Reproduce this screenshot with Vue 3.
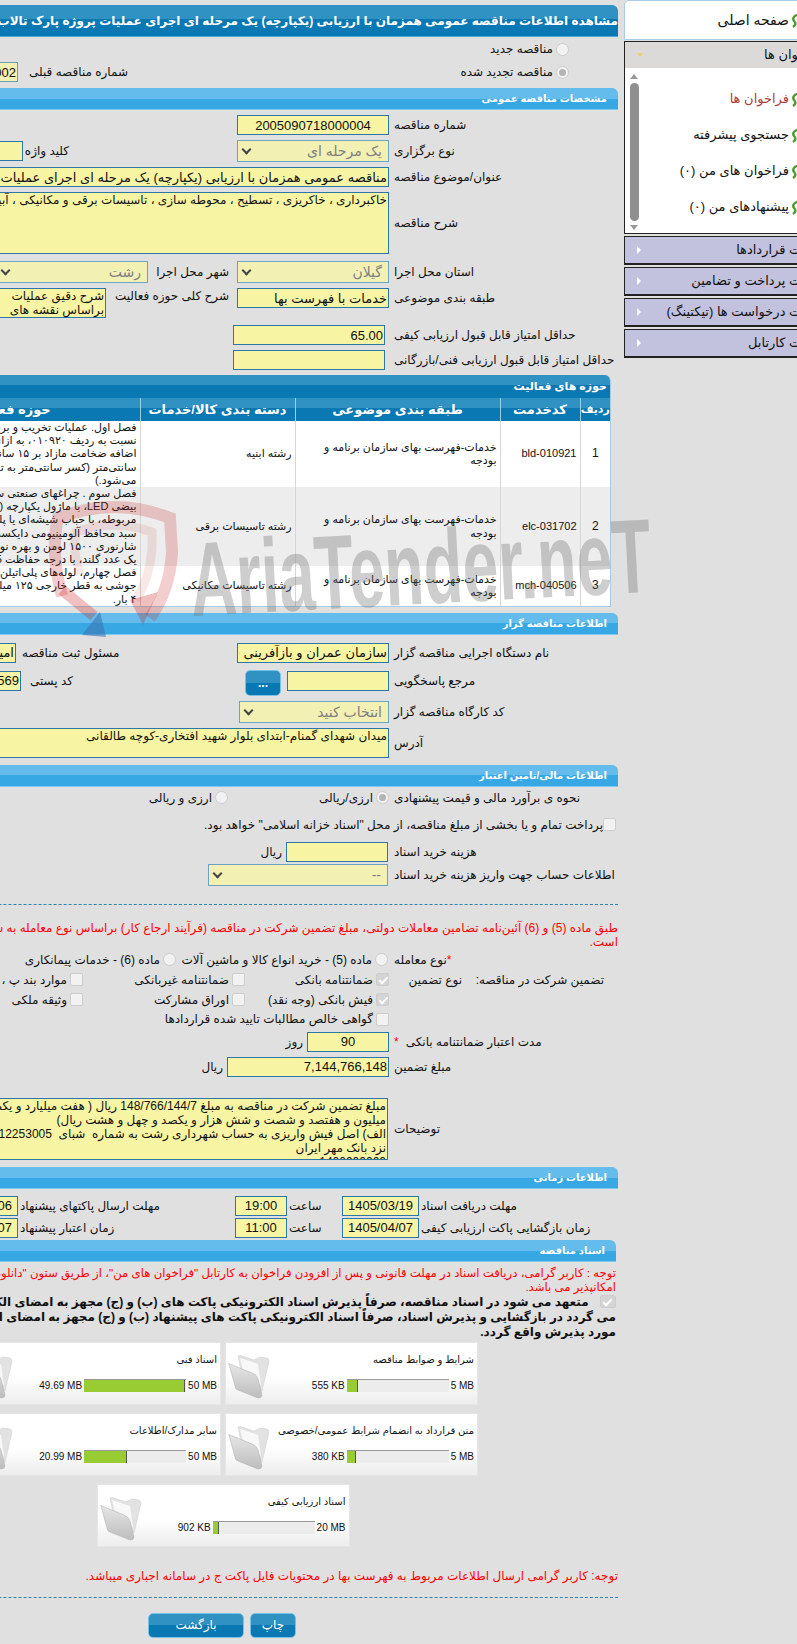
<script setup>
const menuGroups = ['مدیریت قراردادها', 'مدیریت پرداخت و تضامین', 'مدیریت درخواست ها (تیکتینگ)', 'مدیریت کارتابل']
const menuItems = [
  { label: 'فراخوان ها', active: true },
  { label: 'جستجوی پیشرفته' },
  { label: 'فراخوان های من (۰)' },
  { label: 'پیشنهادهای من (۰)' }
]

const scopeRows = [
  {
    id: 1, code: 'bld-010921', cat: 'خدمات-فهرست بهای سازمان برنامه و بودجه', group: 'رشته ابنیه',
    lines: [
      'فصل اول. عملیات تخریب و برچیدن ساختمان',
      'نسبت به ردیف ۰۱۰۹۲۰، به ازای هر سانتی‌متر',
      'اضافه ضخامت مازاد بر ۱۵ سانتی‌متر تا ۲۰',
      'سانتی‌متر (کسر سانتی‌متر به تناسب محاسبه',
      'می‌شود.)'
    ]
  },
  {
    id: 2, code: 'elc-031702', cat: 'خدمات-فهرست بهای سازمان برنامه و بودجه', group: 'رشته تاسیسات برقی',
    lines: [
      'فصل سوم . چراغهای صنعتی سقفی و دیواری',
      'بیضی LED، با ماژول یکپارچه (COB) با درایور',
      'مربوطه، با حباب شیشه‌ای یا پلی کربنات همراه',
      'سبد محافظ آلومینیومی دایکست شده با توان',
      'شارنوری ۱۵۰۰ لومن و بهره نوری مناسب با',
      'یک عدد گلند، با درجه حفاظت IP65 کامل'
    ]
  },
  {
    id: 3, code: 'mch-040506', cat: 'خدمات-فهرست بهای سازمان برنامه و بودجه', group: 'رشته تاسیسات مکانیکی',
    lines: [
      'فصل چهارم، لوله‌های پلی‌اتیلن فشار قوی',
      'جوشی به قطر خارجی ۱۲۵ میلی‌متر برای فشار',
      '۴ بار.'
    ]
  }
]

const docRows = [
  [
    { title: 'شرایط و ضوابط مناقصه', used: '555 KB', total: '5 MB', pct: 11 },
    { title: 'اسناد فنی', used: '49.69 MB', total: '50 MB', pct: 99.4 }
  ],
  [
    { title: 'متن قرارداد به انضمام شرایط عمومی/خصوصی', used: '380 KB', total: '5 MB', pct: 9 },
    { title: 'سایر مدارک/اطلاعات', used: '20.99 MB', total: '50 MB', pct: 42 }
  ],
  [
    { title: 'اسناد ارزیابی کیفی', used: '902 KB', total: '20 MB', pct: 6 }
  ]
]

const descText = 'خاکبرداری ، خاکریزی ، تسطیح ، محوطه سازی ، تاسیسات برقی و مکانیکی ، آبیاری و فضای سبز'
const activityText = 'شرح دقیق عملیات\nبراساس نقشه های'
const addressText = 'میدان شهدای گمنام-ابتدای بلوار شهید افتخاری-کوچه طالقانی'
const guaranteeText = 'مبلغ تضمین شرکت در مناقصه به مبلغ 148/766/144/7 ریال ( هفت میلیارد و یکصد و چهل و چهار\nمیلیون و هفتصد و شصت و شش هزار و یکصد و چهل و هشت ریال)\nالف) اصل فیش واریزی به حساب شهرداری رشت به شماره  شبای  IR060600320170012253005\nنزد بانک مهر ایران\n1400000000'
</script>

<template>
  <div class="page" dir="rtl">
    <aside class="side">
      <div class="home">
        <svg class="leaf" viewBox="0 0 14 16"><path d="M9 2C2 3 0 6 2 9c2 2 2 4-1 6" fill="none" stroke="#4a9c2d" stroke-width="2.4"/><path d="M9 2l2 3" stroke="#e9a53a" stroke-width="1.5"/></svg>
        <span>صفحه اصلی</span>
      </div>
      <div class="acc open">
        <div class="acc-head"><span class="acc-text">عنوان ها</span><i class="tri-down"></i></div>
        <div class="acc-body">
          <ul class="acc-list">
            <li v-for="item in menuItems" :key="item.label" :class="{ active: item.active }">
              <svg class="leaf" viewBox="0 0 14 16"><path d="M9 2C2 3 0 6 2 9c2 2 2 4-1 6" fill="none" stroke="#4a9c2d" stroke-width="2.4"/><path d="M9 2l2 3" stroke="#e9a53a" stroke-width="1.5"/></svg>
              <span>{{ item.label }}</span>
            </li>
          </ul>
          <div class="scroll"><i class="sc-up"></i><b></b><i class="sc-down"></i></div>
        </div>
      </div>
      <div v-for="g in menuGroups" :key="g" class="acc-group">
        <span class="acc-text">{{ g }}</span><i class="tri-left"></i>
      </div>
    </aside>

    <main class="main">
      <div class="title-bar">مشاهده اطلاعات مناقصه عمومی همزمان با ارزیابی (یکپارچه) یک مرحله ای اجرای عملیات پروژه پارک تالاب عینک</div>

      <div class="row r-opt">
        <label class="top-opt"><input type="radio" disabled class="rd"> مناقصه جدید</label>
      </div>
      <div class="row r-prev">
        <label class="top-opt"><input type="radio" disabled checked class="rd"> مناقصه تجدید شده</label>
        <span class="prev-lab">شماره مناقصه قبلی</span>
        <input class="fld pale f-prev" readonly value="2005090718000002">
      </div>

      <div class="sec">مشخصات مناقصه عمومی</div>
      <div class="row">
        <span class="lab">شماره مناقصه</span>
        <input class="fld f-main center" readonly value="2005090718000004">
      </div>
      <div class="row">
        <span class="lab">نوع برگزاری</span>
        <div class="sel f-main"><span>یک مرحله ای</span><i class="chev"></i></div>
        <span class="kw-lab">کلید واژه</span>
        <input class="fld f-kw" readonly>
      </div>
      <div class="row">
        <span class="lab">عنوان/موضوع مناقصه</span>
        <input class="fld f-wide" readonly value="مناقصه عمومی همزمان با ارزیابی (یکپارچه) یک مرحله ای اجرای عملیات پروژه پارک تالاب عینک">
      </div>
      <div class="row r-desc">
        <span class="lab">شرح مناقصه</span>
        <textarea class="fld f-wide area" readonly wrap="off" :value="descText"></textarea>
      </div>
      <div class="row r-city">
        <span class="lab">استان محل اجرا</span>
        <div class="sel f-main"><span>گیلان</span><i class="chev"></i></div>
        <span class="city-lab">شهر محل اجرا</span>
        <div class="sel f-city"><span>رشت</span><i class="chev"></i></div>
      </div>
      <div class="row r-cat">
        <span class="lab">طبقه بندی موضوعی</span>
        <input class="fld f-main" readonly value="خدمات با فهرست بها">
        <span class="city-lab act-lab">شرح کلی حوزه فعالیت</span>
        <textarea class="fld area f-act" readonly wrap="off" :value="activityText"></textarea>
      </div>
      <div class="row r-score">
        <span class="lab">حداقل امتیاز قابل قبول ارزیابی کیفی</span>
        <input class="fld f-score" readonly value="65.00">
      </div>
      <div class="row">
        <span class="lab">حداقل امتیاز قابل قبول ارزیابی فنی/بازرگانی</span>
        <input class="fld f-score" readonly>
      </div>

      <section class="panel">
        <div class="panel-title">حوزه های فعالیت</div>
        <table class="scope">
          <colgroup>
            <col class="c1"><col class="c2"><col class="c3"><col class="c4"><col class="c5">
          </colgroup>
          <thead>
            <tr><th>ردیف</th><th>کدخدمت</th><th>طبقه بندی موضوعی</th><th>دسته بندی کالا/خدمات</th><th>حوزه فعالیت</th></tr>
          </thead>
          <tbody>
            <tr v-for="r in scopeRows" :key="r.id">
              <td class="num">{{ r.id }}</td>
              <td class="num">{{ r.code }}</td>
              <td>{{ r.cat }}</td>
              <td>{{ r.group }}</td>
              <td class="long"><div v-for="l in r.lines" :key="l">{{ l }}</div></td>
            </tr>
          </tbody>
        </table>
      </section>

      <div class="sec s-org">اطلاعات مناقصه گزار</div>
      <div class="row r-org">
        <span class="lab">نام دستگاه اجرایی مناقصه گزار</span>
        <input class="fld f-main" readonly value="سازمان عمران و بازآفرینی فضاهای شهری">
        <span class="resp-lab">مسئول ثبت مناقصه</span>
        <input class="fld f-resp" readonly value="امیر حسین">
      </div>
      <div class="row r-ref">
        <span class="lab">مرجع پاسخگویی</span>
        <input class="fld f-ref" readonly>
        <button class="btn btn-dots" type="button">...</button>
        <span class="zip-lab">کد پستی</span>
        <input class="fld f-zip" readonly value="4134913569">
      </div>
      <div class="row r-work">
        <span class="lab">کد کارگاه مناقصه گزار</span>
        <div class="sel f-work"><span>انتخاب کنید</span><i class="chev"></i></div>
      </div>
      <div class="row r-addr">
        <span class="lab">آدرس</span>
        <textarea class="fld f-wide area" readonly :value="addressText"></textarea>
      </div>

      <div class="sec s-fin">اطلاعات مالی/تامین اعتبار</div>
      <div class="row r-fin">
        <span class="lab">نحوه ی برآورد مالی و قیمت پیشنهادی</span>
        <label class="opt o-fin"><input type="radio" disabled checked class="rd">ارزی/ریالی</label>
        <label class="opt"><input type="radio" disabled class="rd">ارزی و ریالی</label>
      </div>
      <div class="row r-treasury">
        <label class="opt"><input type="checkbox" disabled class="cb">پرداخت تمام و یا بخشی از مبلغ مناقصه، از محل "اسناد خزانه اسلامی" خواهد بود.</label>
      </div>
      <div class="row r-cost">
        <span class="lab">هزینه خرید اسناد</span>
        <input class="fld f-cost" readonly>
        <span class="unit">ریال</span>
      </div>
      <div class="row r-acct">
        <span class="lab">اطلاعات حساب جهت واریز هزینه خرید اسناد</span>
        <div class="sel f-acct"><span>--</span><i class="chev"></i></div>
      </div>
      <hr class="dash d-fin">

      <p class="warn w-law">طبق ماده (5) و (6) آئین‌نامه تضامین معاملات دولتی، مبلغ تضمین شرکت در مناقصه (فرآیند ارجاع کار) براساس نوع معامله به شرح زیر تعیین شده<br>است.</p>

      <div class="row r-deal">
        <span class="lab"><em>*</em>نوع معامله</span>
        <label class="opt o-deal"><input type="radio" disabled class="rd">ماده (5) - خرید انواع کالا و ماشین آلات</label>
        <label class="opt"><input type="radio" disabled class="rd">ماده (6) - خدمات پیمانکاری</label>
      </div>
      <div class="row r-guar">
        <span class="g-a">تضمین شرکت در مناقصه:</span>
        <span class="g-b">نوع تضمین</span>
        <label class="opt o-g1"><input type="checkbox" disabled checked class="cb">ضمانتنامه بانکی</label>
        <label class="opt o-g2"><input type="checkbox" disabled class="cb">ضمانتنامه غیربانکی</label>
        <label class="opt"><input type="checkbox" disabled class="cb">موارد بند پ ، ت</label>
      </div>
      <div class="row r-guar2">
        <label class="opt o-g1"><input type="checkbox" disabled checked class="cb">فیش بانکی (وجه نقد)</label>
        <label class="opt o-g2"><input type="checkbox" disabled class="cb">اوراق مشارکت</label>
        <label class="opt"><input type="checkbox" disabled class="cb">وثیقه ملکی</label>
      </div>
      <div class="row r-guar3">
        <label class="opt"><input type="checkbox" disabled class="cb">گواهی خالص مطالبات تایید شده قراردادها</label>
      </div>
      <div class="row r-days">
        <span class="lab">مدت اعتبار ضمانتنامه بانکی<em class="star-gap">*</em></span>
        <input class="fld f-days center" readonly value="90">
        <span class="unit">روز</span>
      </div>
      <div class="row r-amount">
        <span class="lab">مبلغ تضمین</span>
        <input class="fld f-amount" readonly value="7,144,766,148">
        <span class="unit">ریال</span>
      </div>
      <div class="row r-note">
        <span class="lab">توضیحات</span>
        <textarea class="fld area f-note" readonly wrap="off" :value="guaranteeText"></textarea>
      </div>

      <div class="sec s-time">اطلاعات زمانی</div>
      <div class="row r-t1">
        <span class="lab t-lab">مهلت دریافت اسناد</span>
        <input class="fld f-date center" readonly value="1405/03/19">
        <span class="t-hour">ساعت</span>
        <input class="fld f-hour center" readonly value="19:00">
        <span class="t-right">مهلت ارسال پاکتهای پیشنهاد</span>
        <input class="fld f-date2 center" readonly value="1405/04/06">
      </div>
      <div class="row r-t2">
        <span class="lab t-lab">زمان بازگشایی پاکت ارزیابی کیفی</span>
        <input class="fld f-date center" readonly value="1405/04/07">
        <span class="t-hour">ساعت</span>
        <input class="fld f-hour center" readonly value="11:00">
        <span class="t-right">زمان اعتبار پیشنهاد</span>
        <input class="fld f-date2 center" readonly value="1405/07/07">
      </div>

      <div class="sec s-docs">اسناد مناقصه</div>
      <p class="warn w-docs">توجه : کاربر گرامی، دریافت اسناد در مهلت قانونی و پس از افزودن فراخوان به کارتابل "فراخوان های من"، از طریق ستون "دانلود اسناد"<br>امکانپذیر می باشد.</p>
      <div class="pledge">
        <input type="checkbox" disabled checked class="cb cb-big">
        متعهد می شود در اسناد مناقصه، صرفاً پذیرش اسناد الکترونیکی پاکت های (ب) و (ج) مجهز به امضای الکترونیکی مجاز<br>
        می گردد در بازگشایی و پذیرش اسناد، صرفاً اسناد الکترونیکی پاکت های پیشنهاد (ب) و (ج) مجهز به امضای الکترونیکی<br>
        مورد پذیرش واقع گردد.
      </div>

      <div class="docs">
        <div v-for="(line, i) in docRows" :key="i" class="doc-row">
          <div v-for="d in line" :key="d.title" class="doc">
            <div class="doc-body">
              <div class="doc-title">{{ d.title }}</div>
              <div class="doc-size">
                <span dir="ltr">{{ d.total }}</span>
                <div class="bar"><div class="fill" :style="{ width: d.pct + '%' }"></div></div>
                <span dir="ltr">{{ d.used }}</span>
              </div>
            </div>
            <svg class="folder" viewBox="0 0 42 44">
              <defs>
                <linearGradient id="fg" x1="0" y1="0" x2="0" y2="1"><stop offset="0" stop-color="#e6e6e6"/><stop offset="1" stop-color="#bdbdbd"/></linearGradient>
              </defs>
              <path d="M10 1Q12 0 14 1L26 5L32 2L39 3Q41 4 41 6L34 36L14 20Z" fill="#e2e2e2" stroke="#d2d2d2" stroke-width=".6"/>
              <path d="M12 3L30 9L33 30L16 20Z" fill="#f8f8f8"/>
              <path d="M1 9Q0 8 2 9L24 18Q29 20 30 24L34 40Q34 43 30 43L10 35Q7 34 7 31Z" fill="url(#fg)" stroke="#b5b5b5" stroke-width=".6"/>
            </svg>
          </div>
        </div>
      </div>

      <p class="warn w-end">توجه: کاربر گرامی ارسال اطلاعات مربوط به فهرست بها در محتویات فایل پاکت ج در سامانه اجباری میباشد.</p>
      <hr class="dash d-end">
      <div class="actions">
        <button class="btn btn-print" type="button">چاپ</button>
        <button class="btn btn-back" type="button">بازگشت</button>
      </div>
    </main>

    <div class="mark" aria-hidden="true">
      <svg class="mark-logo" viewBox="40 495 150 150">
        <path d="M62 596 Q50 552 58 518 Q115 496 170 518 L172 552 Q170 590 150 618" fill="none" stroke="#c81e1e" stroke-opacity=".22" stroke-width="12"/>
        <path d="M80 574 Q72 550 76 532 Q112 518 152 532 Q154 570 136 600" fill="none" stroke="#c81e1e" stroke-opacity=".1" stroke-width="9"/>
        <path d="M158 592 L143 625 L130 600 Z" fill="#c81e1e" fill-opacity=".28"/>
        <path d="M62 590 L94 616" stroke="#c81e1e" stroke-opacity=".28" stroke-width="11"/>
        <path d="M100 612 L106 637 L82 635 Z" fill="#3a76b4" fill-opacity=".6"/>
      </svg>
      <div class="mark-text">AriaTender.neT</div>
    </div>
  </div>
</template>

<style scoped>
.page {
  position: relative;
  display: flex;
  align-items: flex-start;
  gap: 6px;
  width: 797px;
  height: 1644px;
  overflow: hidden;
  background: #e0e0e0;
  color: #111;
  font: 12px/14px "Liberation Sans", "DejaVu Sans", sans-serif;
}

/* sidebar */
.side {
  flex: none;
  width: 230px;
  margin-right: -57px;
  white-space: nowrap;
}
.home {
  display: flex;
  align-items: center;
  gap: 3px;
  height: 40px;
  padding-right: 47px;
  background: #fff;
  border: 1px solid #a9cde2;
  border-top-left-radius: 5px;
  box-sizing: border-box;
  font-size: 14px;
}
.leaf {
  flex: none;
  width: 14px;
  height: 16px;
}
.acc {
  margin-top: 1px;
  border: 1px solid #222;
  border-right: 0;
}
.acc-head {
  display: flex;
  align-items: center;
  justify-content: space-between;
  height: 26px;
  padding: 0 44px 0 12px;
  background: #dcd9d9;
  font-size: 13px;
}
.acc-body {
  display: flex;
  height: 165px;
  background: #fff;
}
.acc-list {
  flex: 1;
  margin: 0;
  padding: 13px 48px 0 0;
  list-style: none;
  font-size: 13px;
}
.acc-list li {
  display: flex;
  align-items: center;
  gap: 3px;
  height: 36px;
}
.acc-list li.active {
  color: #b03a3a;
}
.scroll {
  flex: none;
  display: flex;
  flex-direction: column;
  align-items: center;
  width: 14px;
  padding: 6px 0 3px;
  margin-left: 2px;
}
.scroll b {
  flex: 1;
  width: 9px;
  margin: 4px 0;
  border-radius: 5px;
  background: #8f8f8f;
}
.sc-up, .sc-down, .tri-down, .tri-left {
  display: block;
  width: 0;
  height: 0;
}
.sc-up {
  border: 4px solid transparent;
  border-top: 0;
  border-bottom: 5px solid #999;
}
.sc-down {
  border: 4px solid transparent;
  border-bottom: 0;
  border-top: 5px solid #999;
}
.tri-down {
  border: 3px solid transparent;
  border-bottom: 0;
  border-top: 4px solid #e8d26a;
}
.tri-left {
  border: 4px solid transparent;
  border-right: 0;
  border-left: 4px solid #fff;
}
.acc-group {
  display: flex;
  align-items: center;
  justify-content: space-between;
  height: 29px;
  margin-top: 2px;
  padding: 0 24px 0 12px;
  background: #c2c2de;
  border: 1px solid #222;
  border-right: 0;
  border-bottom-width: 2px;
  box-sizing: border-box;
  font-size: 13px;
}

/* main column */
.main {
  flex: none;
  width: 800px;
  padding-top: 5px;
}
.title-bar {
  height: 32px;
  padding-top: 1px;
  border-radius: 0 6px 0 0;
  background: linear-gradient(#2f92c2 0 45%, #0a78b2 45% 100%);
  border-bottom: 1px solid #47a6d6;
  box-sizing: border-box;
  color: #fff;
  font: bold 12px/30px "Liberation Sans", "DejaVu Sans", sans-serif;
  white-space: nowrap;
}
.sec {
  height: 22px;
  padding-right: 11px;
  border-radius: 0 6px 0 0;
  background: linear-gradient(#63bceb 0 50%, #37a8e3 50% 100%);
  border-bottom: 1px solid #7cc8ee;
  box-sizing: border-box;
  color: #fff;
  font: bold 10px/21px "Liberation Sans", "DejaVu Sans", sans-serif;
}

.row {
  display: flex;
  align-items: center;
  margin-top: 5px;
  white-space: nowrap;
}
.r-opt {
  height: 22px;
  margin-top: 1px;
}
.r-prev {
  height: 22px;
  margin-top: 1px;
  margin-bottom: 5px;
}
.top-opt {
  display: flex;
  align-items: center;
  gap: 3px;
  width: 441px;
  margin-right: 49px;
  box-sizing: border-box;
}
.prev-lab {
  width: 105px;
}

.lab {
  flex: none;
  width: 224px;
  text-align: left;
}
.lab em, .g-a em {
  color: #f00;
  font-style: normal;
}
.star-gap {
  margin-right: 7px;
}

.fld {
  flex: none;
  height: 20px;
  margin: 0;
  padding: 0 1px;
  background: #f7f5a3;
  border: 1px solid #2b78a8;
  border-radius: 0;
  box-sizing: border-box;
  color: #111;
  font: 13px/18px "Liberation Sans", "DejaVu Sans", sans-serif;
  outline: none;
  resize: none;
  overflow: hidden;
}
.center {
  text-align: center;
}
.area {
  font-size: 12px;
  line-height: 14px;
}
.pale {
  background: #f2f0b3;
  border-color: #6f9ab0;
}
.sel {
  flex: none;
  display: flex;
  align-items: center;
  justify-content: space-between;
  height: 22px;
  padding: 0 6px 0 4px;
  background: #f2f0b3;
  border: 1px solid #6aa3c3;
  box-sizing: border-box;
  color: #808080;
  font-size: 14px;
}
.chev {
  width: 5px;
  height: 5px;
  margin: -3px 1px 0 1px;
  border: solid #444;
  border-width: 0 0 2px 2px;
  transform: rotate(-45deg);
}

.f-main { width: 152px; margin-right: 5px; }
.f-wide { width: 500px; margin-right: 5px; }
.f-prev { width: 120px; margin-right: 5px; text-align: right; direction: ltr; }
.f-kw { width: 60px; margin-right: 3px; }
.kw-lab { width: 43px; margin-right: 168px; text-align: left; }
.r-desc .area { height: 62px; }
.r-city { margin-top: 7px; }
.city-lab { width: 77px; margin-right: 8px; }
.f-city { width: 152px; margin-right: 4px; }
.r-cat { align-items: flex-start; height: 30px; }
.r-cat .lab { line-height: 20px; }
.act-lab { width: 119px; line-height: 16px; }
.f-act { width: 130px; height: 30px; margin-right: 4px; }
.r-score { margin-top: 7px; }
.f-score { width: 152px; margin-right: 9px; }

/* scope table */
.panel {
  width: 730px;
  margin: 5px 7px 0 0;
  border: 1px solid #a8cbe0;
  border-top: 0;
  border-radius: 0 6px 0 0;
  overflow: hidden;
}
.panel-title {
  height: 23px;
  padding-right: 3px;
  background: linear-gradient(#2f92c2 0 45%, #0a78b2 45% 100%);
  color: #fff;
  font: bold 11px/23px "Liberation Sans", "DejaVu Sans", sans-serif;
}
.scope {
  width: 100%;
  table-layout: fixed;
  border-collapse: collapse;
  font: 11px/13.2px "Liberation Sans", "DejaVu Sans", sans-serif;
}
.c1 { width: 30px; }
.c2 { width: 80px; }
.c3 { width: 205px; }
.c4 { width: 155px; }
.scope th {
  height: 23px;
  padding: 0;
  border-left: 1px solid #9cd0ea;
  background: linear-gradient(#2f92c2 0 45%, #0a78b2 45% 100%);
  color: #fff;
  font-size: 13px;
  white-space: nowrap;
}
.scope th:first-child {
  font-size: 11px;
}
.scope td {
  padding: 0 3px;
  border-left: 1px solid #d6d6d6;
  background: #fff;
  text-align: right;
}
.scope tbody tr:nth-child(2) td {
  background: #ededed;
}
.scope td.num {
  font-size: 11px;
}
.scope td:first-child {
  font-size: 12px;
  text-align: center;
}
.long div {
  white-space: nowrap;
}

/* tender organisation */
.s-org { margin-top: 6px; }
.r-org { margin-top: 8px; }
.resp-lab { width: 103px; margin-right: 112px; text-align: left; }
.f-resp { width: 80px; margin-right: 6px; }
.r-ref { height: 26px; }
.f-ref { width: 102px; margin-right: 5px; }
.btn {
  flex: none;
  padding: 0;
  border: 1px solid #77c3e8;
  border-radius: 5px;
  background: linear-gradient(#2f92c2 0 50%, #0a78b2 50% 100%);
  color: #fff;
  font: 12px "Liberation Sans", "DejaVu Sans", sans-serif;
}
.btn-dots { width: 36px; height: 26px; margin: 4px 6px 0 0; font-weight: bold; }
.zip-lab { width: 47px; margin-right: 168px; text-align: left; }
.f-zip { width: 80px; margin-right: 9px; direction: ltr; text-align: right; }
.r-work { margin-top: 7px; }
.f-work { width: 150px; margin-right: 5px; }
.r-addr .area { height: 30px; }
.s-fin { margin-top: 7px; }
.r-fin { height: 22px; margin-top: 0; }

.opt {
  display: flex;
  align-items: center;
  gap: 3px;
}
.o-fin { width: 161px; margin-right: 5px; }
.rd, .cb {
  flex: none;
  position: relative;
  width: 13px;
  height: 13px;
  margin: 0;
  appearance: none;
  background: #f2f2f2;
  border: 1px solid #cdcdcd;
  box-sizing: border-box;
}
.rd { border-radius: 50%; }
.cb { border-radius: 2px; }
.rd:checked::after {
  content: "";
  position: absolute;
  inset: 2px;
  border-radius: 50%;
  background: #b4b4b4;
}
.cb:checked {
  background: #d4d4d4;
}
.cb:checked::after {
  content: "";
  position: absolute;
  left: 4px;
  top: 1px;
  width: 3px;
  height: 7px;
  border: solid #fff;
  border-width: 0 2px 2px 0;
  transform: rotate(45deg);
}
.r-treasury { height: 20px; margin: 6px 2px 0 0; }
.r-treasury .opt { gap: 0; }
.r-cost { margin-top: 7px; }
.f-cost { width: 102px; margin-right: 6px; }
.unit { margin-right: 4px; }
.r-acct { margin-top: 2px; }
.f-acct { width: 180px; margin-right: 6px; }
.dash {
  height: 0;
  margin: 0;
  border: 0;
  border-top: 1px dashed #2a84b5;
}
.d-fin { margin-top: 18px; }

.warn {
  margin: 0;
  color: #f00;
  white-space: nowrap;
}
.w-law { margin-top: 16px; }
.r-deal { height: 20px; margin-top: 1px; }
.o-deal { width: 212px; margin-right: 6px; }
.r-guar { height: 20px; margin-top: 0; padding-right: 14px; }
.g-a { width: 142px; }
.g-b { width: 73px; }
.o-g1 { width: 144px; }
.o-g2 { width: 162px; }
.r-guar2 { height: 20px; margin-top: 0; padding-right: 229px; }
.r-guar3 { height: 19px; margin-top: 0; padding-right: 229px; }
.r-days { margin-top: 3px; }
.f-days { width: 82px; margin-right: 5px; }
.f-amount { width: 162px; margin-right: 5px; text-align: right; }
.r-note { margin-top: 21px; }
.f-note { width: 500px; height: 62px; margin-right: 6px; }

.s-time { margin-top: 7px; }
.r-t1 { margin-top: 7px; }
.r-t2 { margin-top: 2px; }
.t-lab { width: 197px; }
.f-date { width: 77px; margin-right: 2px; }
.t-hour { width: 35px; margin-right: 18px; text-align: left; }
.f-hour { width: 52px; margin-right: 2px; }
.t-right { width: 147px; margin-right: 68px; text-align: left; }
.f-date2 { width: 77px; margin-right: 2px; }

.s-docs { margin: 2px 2px 0 0; }
.w-docs { margin: 4px 2px 0 0; font-size: 11.7px; }
.pledge {
  position: relative;
  margin: 0 2px 0 0;
  padding-top: 1px;
  color: #111;
  font-size: 12px;
  font-weight: bold;
  line-height: 15px;
  white-space: nowrap;
}
.cb-big {
  display: inline-block;
  width: 16px;
  height: 13px;
  margin-left: 8px;
  vertical-align: -2px;
}

/* documents */
.docs {
  width: 510px;
  margin: 2px 140px 0 0;
}
.doc-row {
  display: flex;
  justify-content: center;
  gap: 4px;
  margin-bottom: 8px;
}
.doc {
  display: flex;
  flex: none;
  width: 253px;
  height: 63px;
  background: linear-gradient(#fff 55%, #ededed);
  box-sizing: border-box;
  border: 1px solid #e6e6e6;
}
.doc-body {
  flex: 1;
  padding: 10px 3px 0 0;
}
.doc-title {
  height: 14px;
  color: #111;
  font-size: 10px;
  line-height: 14px;
  white-space: nowrap;
}
.doc-size {
  display: flex;
  align-items: center;
  gap: 2px;
  margin-top: 12px;
  font-size: 10px;
  line-height: 13px;
}
.bar {
  flex: none;
  width: 102px;
  height: 13px;
  background: #ececec;
  border-top: 1px solid #999;
  box-sizing: border-box;
  direction: ltr;
}
.fill {
  height: 100%;
  background: #9c3;
  border-right: 1px solid #555;
  box-sizing: border-box;
}
.folder {
  flex: none;
  width: 42px;
  height: 44px;
  margin: 12px 0 0 2px;
}

.w-end { margin-top: 22px; }
.d-end { margin-top: 14px; }
.actions {
  display: flex;
  gap: 6px;
  margin: 15px 322px 0 0;
}
.btn-print { width: 46px; height: 25px; }
.btn-back { width: 96px; height: 25px; }

/* logo watermark laid over the form */
.mark {
  position: absolute;
  left: 0;
  top: 495px;
  width: 700px;
  height: 170px;
  pointer-events: none;
}
.mark-logo {
  position: absolute;
  left: 40px;
  top: 0;
  width: 150px;
  height: 150px;
}
.mark-text {
  position: absolute;
  left: 190px;
  top: 32px;
  color: rgba(110, 110, 110, .34);
  font: bold 105px/105px "Liberation Sans", sans-serif;
  white-space: nowrap;
  direction: ltr;
  transform: rotate(-3deg) scaleX(.61);
  transform-origin: 0 50%;
}
</style>

<style>
html, body {
  background: #e0e0e0;
}
</style>
